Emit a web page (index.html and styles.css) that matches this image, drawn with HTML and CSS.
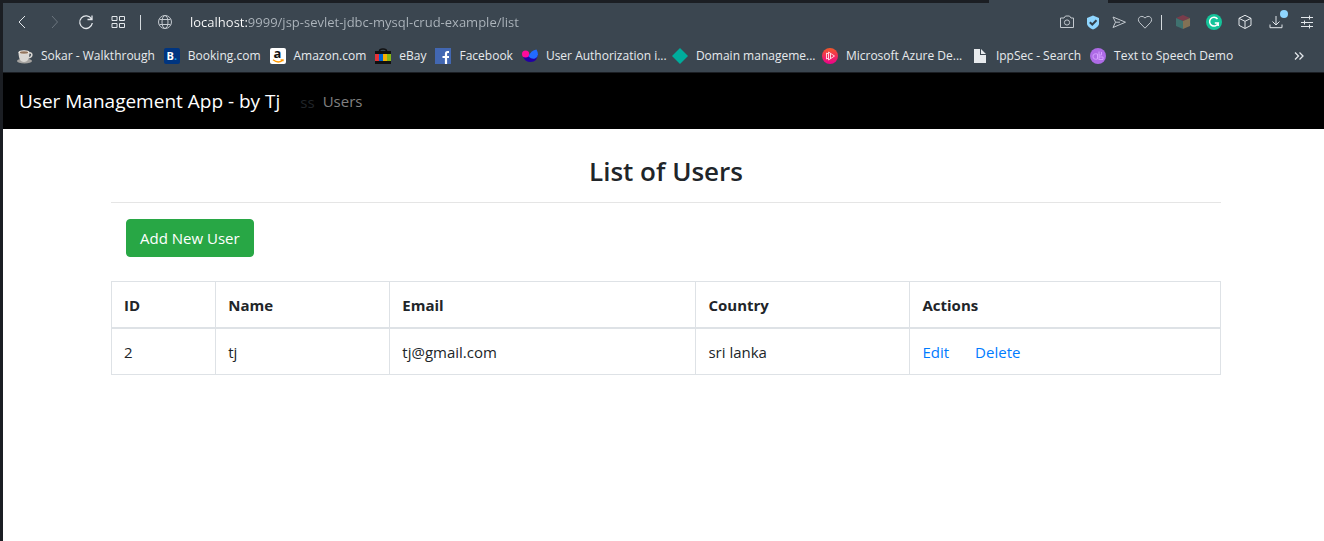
FILE: index.html
```html
<!DOCTYPE html>
<html lang="en">
<head>
<meta charset="utf-8">
<title>User Management Application</title>
<link rel="stylesheet" href="styles.css">
</head>
<body>
<div class="window">
  <div class="tab-edge"><span class="tab-active"></span></div>
  <div class="chrome">
    <div class="toolbar">
      <button class="tool" aria-label="Back"><svg class="icon" viewBox="0 0 16 16"><path d="M11 2 5 8l6 6"/></svg></button>
      <button class="tool tool-off" aria-label="Forward"><svg class="icon" viewBox="0 0 16 16"><path d="m6 2 5.500 6L6 14"/></svg></button>
      <button class="tool" aria-label="Reload"><svg class="icon" viewBox="0 0 16 16"><path stroke-width="1.300" d="M13.500 5A6.300 6.300 0 1 0 14.300 9M14 1.500v4h-4.500"/></svg></button>
      <button class="tool" aria-label="Speed dial"><svg class="icon" viewBox="0 0 16 16"><path d="M2 2.500h5v4H2zM9.500 2.500h5v4h-5zM2 9.500h5v4H2zM9.500 9.500h5v4h-5z"/></svg></button>
      <span class="divider divider-left"></span>
      <button class="tool tool-site" aria-label="Site information"><svg class="icon" viewBox="0 0 16 16"><circle cx="8" cy="8" r="6.500"/><ellipse cx="8" cy="8" rx="3" ry="6.500"/><path d="M2.500 5.500h11M2.500 10.500h11"/></svg></button>
      <input class="address" type="text" aria-label="Address" value="localhost:9999/jsp-sevlet-jdbc-mysql-crud-example/list">
      <button class="tool tool-page" aria-label="Snapshot"><svg class="icon" viewBox="0 0 16 16"><path d="M1.500 4h3.500l1.500-2h4L12 4h2.500v9.500h-13z"/><circle cx="8" cy="8.500" r="2.600"/></svg></button>
      <button class="tool tool-page" aria-label="Ad blocker"><svg class="icon" viewBox="0 0 16 16"><path fill="#8fd6ff" stroke="none" d="M8 1.500 14 4v5.500c0 2.500-3 4.800-6 6-3-1.200-6-3.500-6-6V4z"/><path stroke="#33404b" stroke-width="2" d="m4.800 8.200 2.500 2.300 4.200-4.200"/></svg></button>
      <button class="tool tool-page" aria-label="Send"><svg class="icon" viewBox="0 0 16 16"><path d="m2 3 12.500 5.200L2 13.500l2.500-5.300zM4.500 8.200H9"/></svg></button>
      <button class="tool tool-page" aria-label="Bookmark"><svg class="icon" viewBox="0 0 16 16"><path d="M8 14.200 2.500 8.500C-.8 4.500 4-.1 8 4c4-4.100 8.800.5 5.500 4.500z"/></svg></button>
      <span class="divider"></span>
      <button class="tool tool-ext" aria-label="Package extension"><svg class="icon" viewBox="0 0 16 16"><g stroke="none"><path fill="#793c4b" d="m8 1 7 3-7 3-7-3z"/><path fill="#3f716f" d="m1 4 7 3v8l-7-3z"/><path fill="#827155" d="m15 4-7 3v8l7-3z"/></g></svg></button>
      <button class="tool tool-ext" aria-label="Grammar extension"><svg class="icon" viewBox="0 0 16 16"><circle cx="8" cy="8" r="8" fill="#15c39a" stroke="none"/><path stroke="#fff" stroke-width="1.500" d="M11.500 5A4.400 4.400 0 1 0 12.200 9H8.800M12.200 9v3"/></svg></button>
      <button class="tool tool-ext" aria-label="Extensions"><svg class="icon" viewBox="0 0 16 16"><path d="m8 1.300 6 3v7l-6 3.200-6-3.200v-7zM2 4.300l6 3 6-3M8 7.300v7"/></svg></button>
      <button class="tool tool-ext tool-download" aria-label="Downloads"><svg class="icon" viewBox="0 0 16 16"><path d="M8 2v9M4.500 7.500 8 11l3.500-3.500M2 10.500v3.200h12v-3.200"/></svg><span class="badge"></span></button>
      <button class="tool tool-ext" aria-label="Easy setup"><svg class="icon" viewBox="0 0 16 16"><path d="M2 3.500h12M2 8.500h12M2 12.500h12M10.500 1.500v4M5.500 6.500v4M10.500 10.500v4"/></svg></button>
    </div>
    <nav class="bookmarks" aria-label="Bookmarks">
      <a class="bookmark" href="#"><svg class="icon" viewBox="0 0 16 16"><g stroke="none"><ellipse cx="7.500" cy="13" rx="7.500" ry="2.500" fill="#a5a3a0"/><path fill="#d9d7d3" d="M1.500 4h11c0 6-1.500 10-5.500 10S1.500 10 1.500 4z"/><ellipse cx="7" cy="4.200" rx="5.500" ry="2" fill="#f4f0ea"/><ellipse cx="7" cy="4.500" rx="4.200" ry="1.200" fill="#92755e"/></g><path stroke="#d9d7d3" stroke-width="1.500" d="M12 5c4-1 4 4.500-1 5"/></svg>Sokar - Walkthrough</a>
      <a class="bookmark" href="#"><span class="tile tile-booking">B<span class="dot">.</span></span>Booking.com</a>
      <a class="bookmark" href="#"><span class="tile tile-amazon">a<svg class="smile" viewBox="0 0 12 4"><path d="M1 .8q5 4 9.500.6M8.500.8h2.500v1.500"/></svg></span>Amazon.com</a>
      <a class="bookmark" href="#"><svg class="icon" viewBox="0 0 16 16"><path stroke="#111" stroke-width="1.500" d="M4.500 5V3q0-2 3.500-2t3.500 2v2"/><g stroke="none"><path fill="#111" d="M0 3h16v13H0z"/><path fill="#e53238" d="M0 6h4v7H0z"/><path fill="#0064d2" d="M4 6h4v7H4z"/><path fill="#f5af02" d="M8 6h4v7H8z"/><path fill="#86b817" d="M12 6h4v7h-4z"/></g></svg>eBay</a>
      <a class="bookmark" href="#"><svg class="icon" viewBox="0 0 16 16"><path fill="#4267b2" stroke="none" d="M0 0h16v16H0z"/><path stroke="#fff" stroke-width="2.200" d="M14 4h-1.500Q11 4 11 6v10M7.500 9H14"/></svg>Facebook</a>
      <a class="bookmark bookmark-long" href="#"><svg class="icon" viewBox="0 0 16 16"><g stroke="none"><path fill="#2200a5" d="M1 8.500 7 8l8.500-3Q16 14 8.500 14 3 14 1 8.500z"/><circle cx="3.600" cy="6" r="3.600" fill="#ff0a9b"/><path fill="#216bff" d="M6.500 8.500Q9 2 14.500 1.500 18 8 13 10.500 9.500 11.500 6.500 8.500z"/></g></svg>User Authorization i...</a>
      <a class="bookmark bookmark-long" href="#"><svg class="icon" viewBox="0 0 16 16"><path fill="#00ac9c" stroke="none" d="m8 0 8 8-8 8-8-8z"/></svg>Domain manageme...</a>
      <a class="bookmark bookmark-long" href="#"><svg class="icon" viewBox="0 0 16 16"><defs><linearGradient id="azure" x2="0" y2="1"><stop stop-color="#f35828"/><stop offset="1" stop-color="#ec008c"/></linearGradient></defs><circle cx="8" cy="8" r="8" fill="url(#azure)" stroke="none"/><path stroke="#ffd5df" d="M4.500 5v6M6.500 4v8l6-4zM8.500 5v6M4.500 5l2 1M4.500 11l2-1"/></svg>Microsoft Azure De...</a>
      <a class="bookmark" href="#"><svg class="icon" viewBox="0 0 16 16"><path fill="#e7eaed" stroke="none" d="M2 1h6v6h6v8H2zM9 1l5 5H9z"/></svg>IppSec - Search</a>
      <a class="bookmark" href="#"><svg class="icon" viewBox="0 0 16 16"><circle cx="8" cy="8" r="8" fill="#ae6be6" stroke="none"/><path stroke="#d6a1ff" d="M7.500 6Q3 5 3 8.500T7.500 11V6M9 3.500V12M11.500 4v3H9M9 9h4v2.500H9"/></svg>Text to Speech Demo</a>
      <button class="more" aria-label="More bookmarks"><svg class="icon" viewBox="0 0 16 16"><path stroke-width="1.300" d="m4 4.500 3.500 3.500L4 11.500M8.500 4.500 12 8l-3.500 3.500"/></svg></button>
    </nav>
  </div>
  <header class="navbar">
    <a class="brand" href="#">User Management App - by Tj</a>
    <span class="stray">ss</span>
    <a class="nav-link" href="#">Users</a>
  </header>
  <main class="page">
    <div class="container">
      <h3 class="title">List of Users</h3>
      <hr class="rule">
      <div class="actions"><a class="btn-success" href="#">Add New User</a></div>
      <table class="table">
        <colgroup><col class="col-id"><col class="col-name"><col class="col-email"><col class="col-country"><col class="col-actions"></colgroup>
        <thead><tr><th>ID</th><th>Name</th><th>Email</th><th>Country</th><th>Actions</th></tr></thead>
        <tbody><tr><td>2</td><td>tj</td><td>tj@gmail.com</td><td>sri lanka</td><td><div class="row-links"><a href="#">Edit</a><a href="#">Delete</a></div></td></tr></tbody>
      </table>
    </div>
  </main>
</div>
</body>
</html>
```
FILE: styles.css
```css
* { box-sizing: border-box; }
body {
  margin: 0;
  background: #fff;
  color: #212529;
  font-family: "Open Sans", "Noto Sans", sans-serif;
  font-size: 15px;
  line-height: 21px;
}
a { color: #007bff; text-decoration: none; }
button { padding: 0; border: 0; background: none; color: inherit; font: inherit; }
.window { min-height: 100vh; border-left: 3px solid #1b1e23; }

.tab-edge { display: flex; justify-content: flex-end; height: 3px; padding-right: 216px; background: #1b1e23; }
.tab-active { width: 119px; background: #3b4650; }
.chrome { padding-bottom: 2px; border-bottom: 1px solid #1b1e23; background: #3b4650; color: #e3e7eb; }
.icon { display: block; flex: none; width: 16px; height: 16px; fill: none; stroke: currentColor; }

.toolbar { display: flex; align-items: center; height: 38px; padding: 0 2px 0 3px; }
.tool { display: flex; flex: none; align-items: center; justify-content: center; width: 32px; height: 32px; }
.tool-off { color: #6b757e; }
.tool-site { width: 36px; color: #c3c9cf; }
.tool-page { width: 26px; color: #c3c9cf; }
.tool-ext { width: 31px; }
.tool-download { position: relative; }
.badge { position: absolute; top: 4px; right: 3px; width: 8px; height: 8px; border-radius: 50%; background: #8fd6ff; }
.divider { flex: none; width: 1px; height: 15px; margin: 0 5px 0 3px; background: #d4d9dd; }
.divider-left { margin: 0 6px; }
.address {
  flex: 1;
  min-width: 0;
  margin-left: 7px;
  padding: 0;
  border: 0;
  outline: 0;
  background: linear-gradient(90deg, #fff 57px, #aeb6bd 57px);
  background-clip: text;
  color: transparent;
  font-family: inherit;
  font-size: 13px;
}

.bookmarks { display: flex; align-items: center; gap: 9px; height: 29px; padding: 0 17px 0 14px; font-size: 12px; }
.bookmark { display: flex; flex: none; align-items: center; gap: 8px; color: #e7eaed; white-space: nowrap; }
.bookmark-long { width: 141px; }
.more { margin-left: auto; }
.tile { position: relative; display: flex; justify-content: center; width: 16px; height: 16px; border-radius: 2px; font-size: 11px; font-weight: 700; line-height: 16px; }
.tile-booking { background: #003580; color: #fff; }
.dot { color: #14a7e8; }
.tile-amazon { background: #fff; color: #111; font-size: 13px; line-height: 11px; }
.smile { position: absolute; bottom: 1px; left: 2px; width: 12px; height: 4px; fill: none; stroke: #f90; stroke-width: 1.3; }

.navbar { display: flex; align-items: center; height: 56px; padding: 0 16px; background: #000; }
.brand { color: #fff; font-size: 19px; line-height: 30px; }
.stray { margin-left: 20px; padding-top: 3px; color: #212529; }
.nav-link { margin-left: 8px; color: #808080; }

.page { padding: 24px 16px 24px 21px; }
.container { max-width: 1110px; margin: 0 auto; }
.title { margin: 0 0 13px; font-size: 26px; font-weight: 600; line-height: 36px; text-align: center; }
.rule { margin: 0 0 16px; border: 0; border-top: 1px solid #e5e5e5; }
.actions { display: flex; margin-bottom: 24px; padding-left: 15px; }
.btn-success { padding: 8px 13px; border: 1px solid #28a745; border-radius: 4px; background: #28a745; color: #fff; line-height: 20px; }
.table { width: 100%; border-collapse: collapse; table-layout: fixed; }
.table th, .table td { padding: 13px 12px 11px; border: 1px solid #dee2e6; text-align: left; }
.table thead th { border-bottom-width: 2px; }
.col-id { width: 9.4%; }
.col-name { width: 15.7%; }
.col-email { width: 27.6%; }
.col-country { width: 19.3%; }
.col-actions { width: 28%; }
.row-links { display: flex; gap: 26px; }
```
